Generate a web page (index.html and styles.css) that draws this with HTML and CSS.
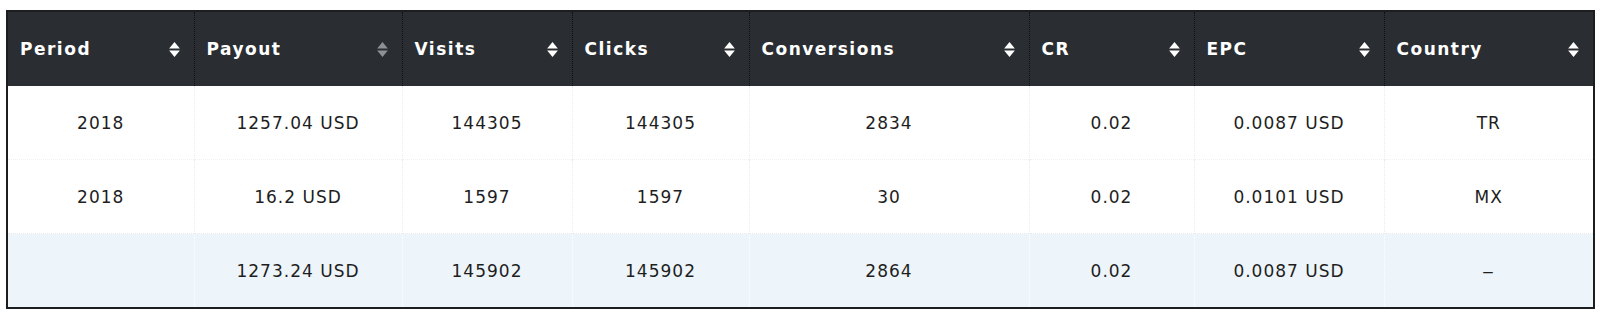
FILE: index.html
```html
<!DOCTYPE html>
<html>
<head>
<meta charset="utf-8">
<link rel="stylesheet" href="styles.css">
</head>
<body>
<div class="wrap">
<table class="stats">
  <colgroup>
    <col class="c1"><col class="c2"><col class="c3"><col class="c4"><col class="c5"><col class="c6"><col class="c7"><col class="c8">
  </colgroup>
  <thead>
    <tr>
      <th><div class="th"><span>Period</span><svg class="sort" viewBox="0 0 10 14"><path d="M5 0 L10 6 L0 6 Z M0 8 L10 8 L5 14 Z"/></svg></div></th>
      <th><div class="th"><span>Payout</span><svg class="sort dim" viewBox="0 0 10 14"><path d="M5 0 L10 6 L0 6 Z M0 8 L10 8 L5 14 Z"/></svg></div></th>
      <th><div class="th"><span>Visits</span><svg class="sort" viewBox="0 0 10 14"><path d="M5 0 L10 6 L0 6 Z M0 8 L10 8 L5 14 Z"/></svg></div></th>
      <th><div class="th"><span>Clicks</span><svg class="sort" viewBox="0 0 10 14"><path d="M5 0 L10 6 L0 6 Z M0 8 L10 8 L5 14 Z"/></svg></div></th>
      <th><div class="th"><span>Conversions</span><svg class="sort" viewBox="0 0 10 14"><path d="M5 0 L10 6 L0 6 Z M0 8 L10 8 L5 14 Z"/></svg></div></th>
      <th><div class="th"><span>CR</span><svg class="sort" viewBox="0 0 10 14"><path d="M5 0 L10 6 L0 6 Z M0 8 L10 8 L5 14 Z"/></svg></div></th>
      <th><div class="th"><span>EPC</span><svg class="sort" viewBox="0 0 10 14"><path d="M5 0 L10 6 L0 6 Z M0 8 L10 8 L5 14 Z"/></svg></div></th>
      <th><div class="th"><span>Country</span><svg class="sort" viewBox="0 0 10 14"><path d="M5 0 L10 6 L0 6 Z M0 8 L10 8 L5 14 Z"/></svg></div></th>
    </tr>
  </thead>
  <tbody>
    <tr>
      <td>2018</td><td>1257.04 USD</td><td>144305</td><td>144305</td><td>2834</td><td>0.02</td><td>0.0087 USD</td><td>TR</td>
    </tr>
    <tr>
      <td>2018</td><td>16.2 USD</td><td>1597</td><td>1597</td><td>30</td><td>0.02</td><td>0.0101 USD</td><td>MX</td>
    </tr>
    <tr class="total">
      <td></td><td>1273.24 USD</td><td>145902</td><td>145902</td><td>2864</td><td>0.02</td><td>0.0087 USD</td><td><span class="dash">–</span></td>
    </tr>
  </tbody>
</table>
</div>
</body>
</html>
```
FILE: styles.css
```css
html, body {
  margin: 0;
  padding: 0;
  background: #ffffff;
}
.wrap {
  padding: 10px 7px 0 6px;
}
.stats {
  width: 1587px;
  border-collapse: collapse;
  table-layout: fixed;
  border: 2px solid #1b1d1f;
  font-family: "DejaVu Sans", "Open Sans", sans-serif;
}
.c1 { width: 187px; }
.c2 { width: 208px; }
.c3 { width: 170px; }
.c4 { width: 177px; }
.c5 { width: 280px; }
.c6 { width: 165px; }
.c7 { width: 190px; }
.c8 { width: 210px; }

.stats thead th {
  background: #2a2e33;
  height: 74px;
  padding: 0 14px 0 12px;
  color: #ffffff;
  font-weight: 700;
  font-size: 17px;
  letter-spacing: 1.5px;
  text-align: left;
  border-left: 1px dotted #0d0f10;
  border-top: 1px dotted #0d0f10;
}
.stats thead th:first-child { border-left: none; }
.th {
  display: flex;
  align-items: center;
  justify-content: space-between;
}
.sort {
  width: 11px;
  height: 15px;
  fill: #ffffff;
  flex: none;
}
.sort.dim { fill: #8d9196; }

.stats tbody td {
  height: 73px;
  padding: 0;
  text-align: center;
  color: #1e1e1e;
  font-size: 17px;
  letter-spacing: 1px;
  border-left: 1px dotted #e6ecef;
  border-top: 1px dotted #eef1f3;
  background: #ffffff;
}
.stats tbody td:first-child { border-left: none; }
.stats tbody tr:first-child td { border-top: none; }
.stats tbody tr.total td {
  background: #edf5fb;
  border-left: 1px dotted #ffffff;
  border-top: 1px dotted #e4ebf0;
}
.stats tbody tr.total td:first-child { border-left: none; }
.dash {
  display: inline-block;
  transform: scaleX(1.4);
}
```
